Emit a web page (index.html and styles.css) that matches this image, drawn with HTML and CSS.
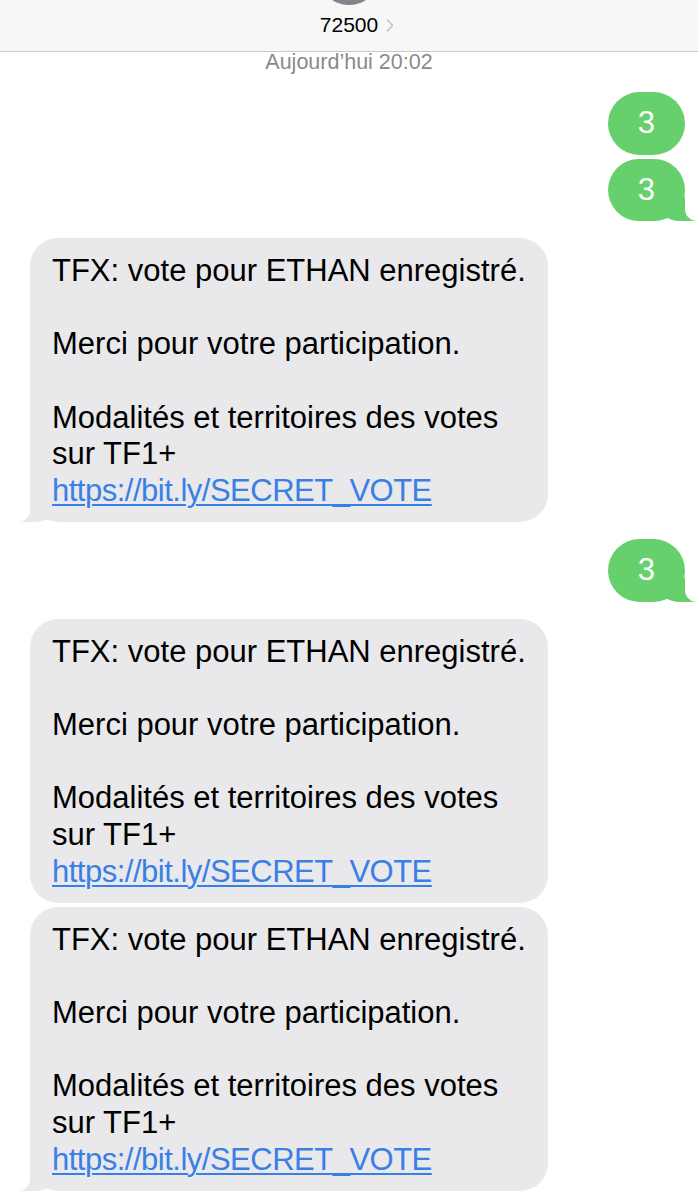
FILE: index.html
```html
<!DOCTYPE html>
<html lang="fr">
<head>
    <meta charset="UTF-8">
    <meta name="viewport" content="width=device-width, initial-scale=1.0">
    <title>72500</title>
    <link rel="stylesheet" href="styles.css">
</head>
<body>

<header class="contact-bar">
    <div class="avatar"></div>
    <div class="contact-name">
        <span>72500</span>
        <svg class="chevron" width="8" height="13" viewBox="0 0 8 13">
            <polyline points="1.5,1 6.5,6.5 1.5,12" fill="none" stroke="#c4c4c7" stroke-width="1.6" stroke-linecap="round" stroke-linejoin="round"/>
        </svg>
    </div>
</header>

<div class="timestamp">Aujourd’hui 20:02</div>

<div class="thread">
    <div class="group out">
        <div class="bubble sent">3</div>
        <div class="bubble sent tail">3</div>
    </div>

    <div class="group in">
        <div class="bubble received tail">
            TFX: vote pour ETHAN enregistré.<br><br>Merci pour votre participation.<br><br>Modalités et territoires des votes<br>sur TF1+<br><a href="#">https://bit.ly/SECRET_VOTE</a>
        </div>
    </div>

    <div class="group out">
        <div class="bubble sent tail">3</div>
    </div>

    <div class="group in">
        <div class="bubble received">
            TFX: vote pour ETHAN enregistré.<br><br>Merci pour votre participation.<br><br>Modalités et territoires des votes<br>sur TF1+<br><a href="#">https://bit.ly/SECRET_VOTE</a>
        </div>
        <div class="bubble received tail">
            TFX: vote pour ETHAN enregistré.<br><br>Merci pour votre participation.<br><br>Modalités et territoires des votes<br>sur TF1+<br><a href="#">https://bit.ly/SECRET_VOTE</a>
        </div>
    </div>
</div>

</body>
</html>
```

FILE: styles.css
```css
body {
    font-family: "Liberation Sans", Arial, sans-serif;
    margin: 0;
    padding: 0;
    background-color: #ffffff;
    color: #000000;
    overflow: hidden;
}

.contact-bar {
    background-color: #f7f7f7;
    border-bottom: 1px solid #c9c9cc;
    height: 51px;
    display: flex;
    flex-direction: column;
    align-items: center;
    overflow: hidden;
}

.avatar {
    width: 62px;
    height: 62px;
    margin-top: -57px;
    border-radius: 50%;
    background: linear-gradient(#a3a6ad, #7f8289);
}

.contact-name {
    display: flex;
    align-items: center;
    gap: 8px;
    margin-top: 7px;
    margin-left: 16px;
    font-size: 21px;
    line-height: 26px;
}

.chevron {
    display: block;
}

.timestamp {
    text-align: center;
    font-size: 21.5px;
    line-height: 20px;
    color: #8a8a8e;
}

.thread {
    display: flex;
    flex-direction: column;
    gap: 17px;
    padding: 20px 13px 0 30px;
}

.group {
    display: flex;
    flex-direction: column;
    gap: 4px;
}

.group.out {
    align-items: flex-end;
}

.group.in {
    align-items: flex-start;
}

.bubble {
    position: relative;
    z-index: 0;
    font-size: 31px;
    line-height: 36.6px;
    border-radius: 28px;
}

.sent {
    background-color: #66d06c;
    color: white;
    padding: 13px 30px;
    border-radius: 32px;
}

.received {
    background-color: #e9e9eb;
    padding: 15px 22px 13px 22px;
}

.received a {
    color: #3a7fe6;
    letter-spacing: -0.5px;
    text-decoration: underline;
    text-underline-offset: 3px;
    text-decoration-thickness: 1.5px;
}

/* bubble tails */
.tail::before,
.tail::after {
    content: "";
    position: absolute;
    bottom: 0;
    height: 24px;
    z-index: -1;
}

.sent.tail::before {
    right: -12px;
    width: 37px;
    background-color: #66d06c;
    border-bottom-left-radius: 20px 14px;
}

.sent.tail::after {
    right: -14px;
    width: 14px;
    background-color: white;
    border-bottom-left-radius: 12px;
}

.received.tail::before {
    left: -12px;
    width: 37px;
    background-color: #e9e9eb;
    border-bottom-right-radius: 20px 14px;
}

.received.tail::after {
    left: -14px;
    width: 14px;
    background-color: white;
    border-bottom-right-radius: 12px;
}
```
